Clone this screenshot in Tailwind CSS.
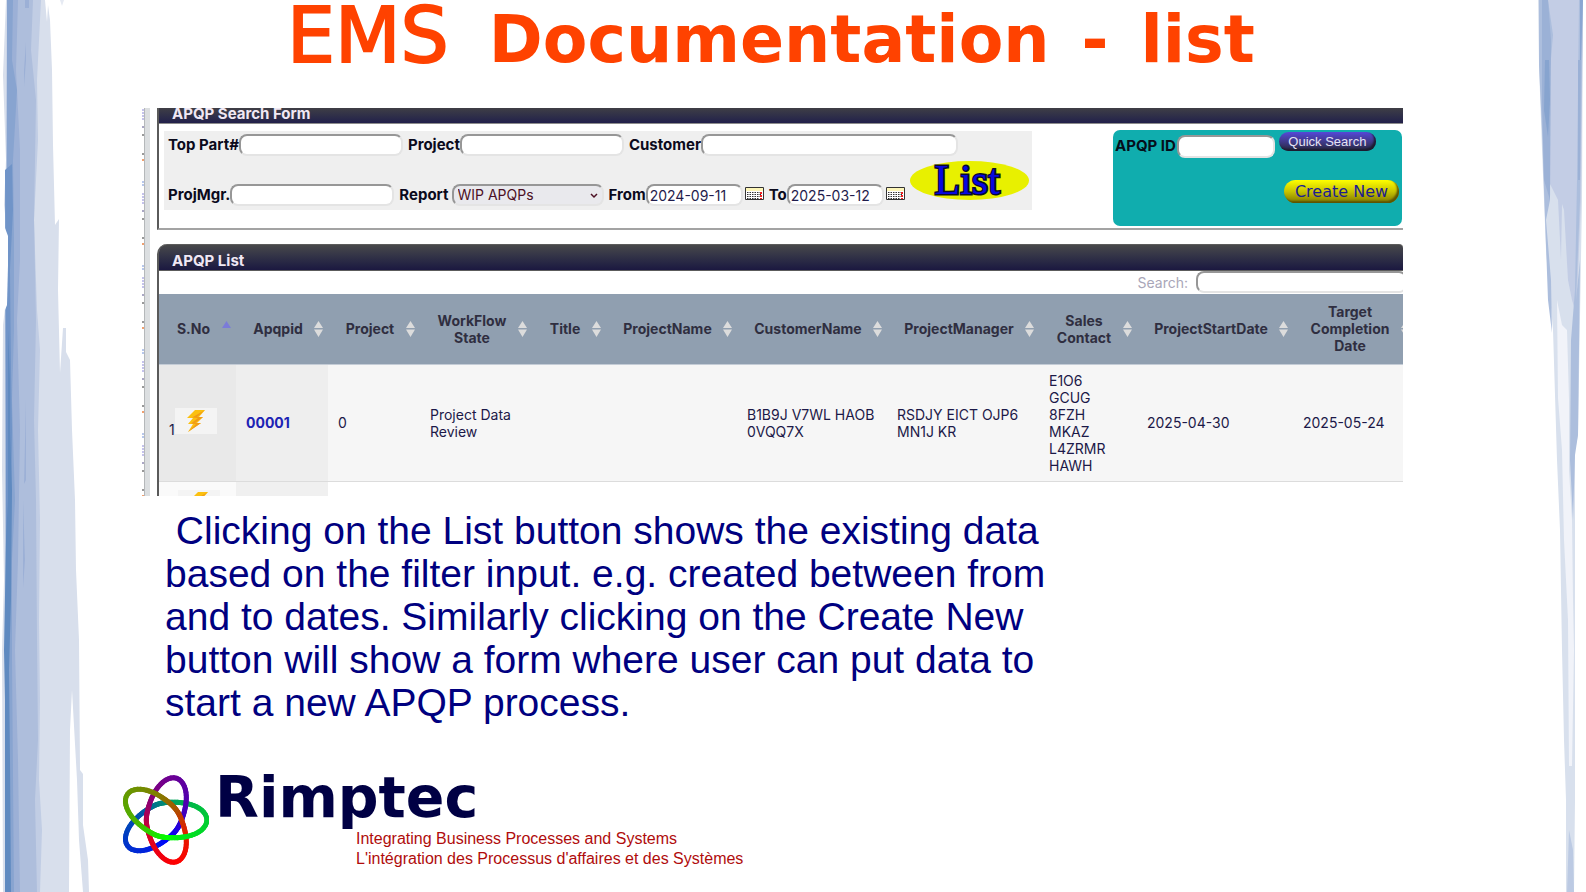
<!DOCTYPE html>
<html lang="en">
<head>
    <meta charset="UTF-8">
    <meta name="viewport" content="width=device-width, initial-scale=1.0">
    <title>EMS Documentation - list</title>
    <script src="https://cdn.jsdelivr.net/npm/@tailwindcss/browser@4"></script>
</head>
<body class="bg-white">
<main class="relative min-h-screen overflow-hidden">

    <!-- brush strokes on both edges -->
    <svg class="absolute left-0 top-0 h-full w-[92px]" viewBox="0 0 92 892" preserveAspectRatio="none" aria-hidden="true">
        <path fill="#d8dfec" d="M6 0H45L47 22L48 5L50 20L52 70L53 145L55 225L59 219L58 290L60 373L63 328H66V352L70 360L72 430L75 500L76 570L79 640L80 770L83 774L83 825L88 860L89 892H83L79 840L77 780L72 690L70 730L69 892H3L2 650L4 580L2 470L3 325L6 300L7 230L4 205L6 160L3 75Z"/>
        <path fill="#c1cde4" d="M6 0H41L37 80L38 140L34 220L37 310L40 350L38 430L40 520L39 620L40 700L39 780L42 830L40 892H5V670L7 560L7 0Z"/>
        <path fill="#aebedc" d="M7 0H33L31 50L36 100L34 220L36 320L34 420L36 500L37 640L38 740L35 800L37 892H6L7 520Z"/>
        <path fill="#9cb0d6" d="M7 0H18L16 70L20 150L20 260L17 320L20 430L18 560L15 650L18 760L20 892H6Z"/>
        <path fill="#9cb0d6" d="M25 0H29V8H25ZM26 42L24 70L24 87L26 60ZM26 400L24 484L26 480ZM23 500L23 588L25 560Z"/>
        <path fill="#88a4d0" d="M7 0H13L12 60L17 90L13 160L14 240L14 330L12 400L15 500L12 560L12 660L14 892H5Z"/>
        <path fill="#7094c8" d="M5 170L12 164L13 210L10 270L11 370L12 430L11 520L8 640H6Z"/>
        <path fill="#5f8ac0" d="M8 330L10 380V430L12 490L11 600L9 670L10 760L11 892H5L5 700L4 650L6 540L8 500Z"/>
        <path fill="#fff" d="M5 228L8 236V265L7 305L5 310Z"/>
        <path fill="#e6eaf3" d="M60 0H64L62 6Z"/>
    </svg>
    <svg class="absolute right-0 top-0 h-full w-[60px]" viewBox="0 0 60 892" preserveAspectRatio="none" aria-hidden="true">
        <path fill="#d8e0ed" d="M12 0H57L56 200L52 435L49 450L49 800L48 892H40L40 800L38 740L36 650L34 530L31 460L27 330L20 250L16 150L13 65Z"/>
        <path fill="#c3cde5" d="M14 0H57L55 200L51 300L49 310L46 300L42 280L38 210L36 204L35 260L32 200L22 180L17 130Z"/>
        <path fill="#acbedd" d="M50 300L54 200L57 0H53L51 180L49 290L45 340L44 460L47 520L49 455L52 435L54 260Z"/>
        <path fill="#acbedd" d="M13 0H22L27 35L24 70V200L20 220L25 280L26 333L22 300L18 190L16 130L13 65Z"/>
        <path fill="#9bb1d6" d="M16 0H22L25 40L24 200L18 180L16 100Z"/>
        <path fill="#87a4cf" d="M19 60H23L24 100L22 137L18 110Z"/>
        <path fill="#8aa6d2" d="M54 0H57L55 60H54Z"/>
        <path fill="#9bb1d6" d="M52 60H55L54 180H52Z"/>
        <path fill="#f1f3f9" d="M31 300L36 325L41 330L43 400L43 470L46 520L47 600L48 650L46 766H43L42 620L38 540L36 450L32 398Z"/>
        <path fill="#bccae3" d="M43 830L47 850L48 892H41Z"/>
    </svg>

    <h1 class="flex h-[108px] items-baseline gap-8 whitespace-nowrap pl-[287px] font-['DejaVu_Sans'] text-[65px] font-bold leading-[72px] text-[#ff4200]">
        <span class="mr-2 text-[76px] font-normal [-webkit-text-stroke:2px_#ff4200]">EMS</span>
        <span>Documentation</span>
        <span>-</span>
        <span>list</span>
    </h1>

    <!-- application window, clipped -->
    <section class="ml-[142px] mr-[183px] flex h-[388px] overflow-hidden bg-white font-[Inter]">
        <div class="flex w-[15px] shrink-0" aria-hidden="true">
            <svg class="h-full w-[2px]" viewBox="0 0 2 388" preserveAspectRatio="none">
                <defs>
                    <pattern id="ticks" width="2" height="84" patternUnits="userSpaceOnUse">
                        <path stroke="#8a86d8" d="M0 2H2M0 5H2M0 8H2M0 11H2"/>
                        <path stroke="#55508a" d="M0 19H2"/>
                        <path stroke="#333" d="M0 27H2M0 46H2"/>
                        <path stroke="#f0a070" stroke-width="2" d="M0 52H2"/>
                        <path stroke="#7090d8" d="M0 74H2M0 77H2"/>
                    </pattern>
                </defs>
                <rect width="2" height="388" fill="url(#ticks)"/>
            </svg>
            <div class="w-[6px] border-l border-[#b5b8ba] bg-[#dcdfe1]"></div>
        </div>

        <div class="min-w-0 flex-1">
            <div class="h-[122px] border-b-2 border-l-2 border-b-[#a3a3a3] border-l-[#5a5a5a]">
                <h2 class="flex h-4 items-end border-b border-[#8c8c8c] bg-linear-to-b from-[#3f3e45] to-[#22204a] pl-[13px] text-[15px] font-bold leading-[18px] text-[#f0e8f4]">APQP Search Form</h2>
                <div class="flex items-start justify-between pr-px pt-[6px]">
                    <form class="ml-[5px] mt-px flex h-[79px] w-[868px] flex-col gap-[5px] bg-[#efefef] pl-1 pt-[3px] text-[15px] font-bold leading-[22px] text-[#0b0a1c]">
                        <div class="flex gap-[5px]">
                            <div class="flex">
                                <label for="top-part">Top Part#</label>
                                <input id="top-part" type="text" class="h-[22px] w-[164px] rounded-lg border-2 border-b-[#e4e4e4] border-l-[#979797] border-r-[#e4e4e4] border-t-[#979797] bg-white">
                            </div>
                            <div class="flex">
                                <label for="project">Project</label>
                                <input id="project" type="text" class="h-[22px] w-[164px] rounded-lg border-2 border-b-[#e4e4e4] border-l-[#979797] border-r-[#e4e4e4] border-t-[#979797] bg-white">
                            </div>
                            <div class="flex">
                                <label for="customer">Customer</label>
                                <input id="customer" type="text" class="h-[22px] w-[257px] rounded-lg border-2 border-b-[#e4e4e4] border-l-[#979797] border-r-[#e4e4e4] border-t-[#979797] bg-white">
                            </div>
                        </div>
                        <div class="flex h-[45px] items-end gap-[5px]">
                            <div class="flex">
                                <label for="proj-mgr">ProjMgr.</label>
                                <input id="proj-mgr" type="text" class="h-[22px] w-[164px] rounded-lg border-2 border-b-[#e4e4e4] border-l-[#979797] border-r-[#e4e4e4] border-t-[#979797] bg-white">
                            </div>
                            <div class="flex gap-[3px]">
                                <label for="report">Report</label>
                                <div class="relative">
                                    <select id="report" class="h-[22px] w-[152px] appearance-none rounded-lg border-2 border-b-[#e4e4e4] border-l-[#979797] border-r-[#e4e4e4] border-t-[#979797] bg-[#e9e9ed] pl-1 text-sm font-normal leading-[18px] text-[#4c1024]">
                                        <option>WIP APQPs</option>
                                    </select>
                                    <svg class="pointer-events-none absolute right-[6px] top-2 h-2 w-2" viewBox="0 0 8 8" fill="none" stroke="#4c1024" stroke-width="1.5"><path d="M1 2L4 5L7 2"/></svg>
                                </div>
                            </div>
                            <div class="flex">
                                <label for="from">From</label>
                                <input id="from" type="text" value="2024-09-11" class="h-[22px] w-[97px] rounded-lg border-2 border-b-[#e4e4e4] border-l-[#979797] border-r-[#e4e4e4] border-t-[#979797] bg-white pl-[2px] text-sm font-normal text-[#1f1c4c]">
                                <button type="button" aria-label="Pick from date" class="ml-[2px] h-[22px] w-[19px] pt-[3px]">
                                    <svg class="-mt-[7px] h-[13px] w-[19px]" viewBox="0 0 19 13">
                                        <path fill="#fff" stroke="#333" d="M.5 .5H18.5V12.5H.5Z"/>
                                        <path fill="#fdf6b8" d="M1 1H18V4H1Z"/>
                                        <path stroke="#333" stroke-dasharray="1.5 1" d="M2 5.5H17M2 7.5H17M2 9.5H17M2 11.5H14"/>
                                        <path stroke="#f02020" stroke-width="2" stroke-dasharray="2 1" d="M16 5V12"/>
                                    </svg>
                                </button>
                            </div>
                            <div class="flex">
                                <label for="to">To</label>
                                <input id="to" type="text" value="2025-03-12" class="h-[22px] w-[97px] rounded-lg border-2 border-b-[#e4e4e4] border-l-[#979797] border-r-[#e4e4e4] border-t-[#979797] bg-white pl-[2px] text-sm font-normal text-[#1f1c4c]">
                                <button type="button" aria-label="Pick to date" class="ml-[2px] h-[22px] w-[19px] pt-[3px]">
                                    <svg class="-mt-[7px] h-[13px] w-[19px]" viewBox="0 0 19 13">
                                        <path fill="#fff" stroke="#333" d="M.5 .5H18.5V12.5H.5Z"/>
                                        <path fill="#fdf6b8" d="M1 1H18V4H1Z"/>
                                        <path stroke="#333" stroke-dasharray="1.5 1" d="M2 5.5H17M2 7.5H17M2 9.5H17M2 11.5H14"/>
                                        <path stroke="#f02020" stroke-width="2" stroke-dasharray="2 1" d="M16 5V12"/>
                                    </svg>
                                </button>
                            </div>
                            <button type="button" class="flex h-[39px] w-[119px] items-center justify-center self-start rounded-[50%] bg-[#e8f000] pb-[2px] pr-1 font-['Liberation_Serif'] text-[42px] font-normal leading-[36px] text-[#0808e0] [-webkit-text-stroke:3px_#0a0a28] [paint-order:stroke]">List</button>
                        </div>
                    </form>
                    <form class="flex h-[96px] w-[289px] flex-col justify-between rounded-[7px] bg-[#10adae] pb-[23px] pl-[2px] pr-[3px] pt-[2px] text-[15px] font-bold text-[#05101c]">
                        <div class="flex items-start">
                            <label for="apqp-id" class="pt-[2px] leading-[23px]">APQP ID</label>
                            <input id="apqp-id" type="text" class="ml-px mt-[3px] h-[23px] w-[98px] rounded-lg border-2 border-b-[#e4e4e4] border-l-[#979797] border-r-[#e4e4e4] border-t-[#979797] bg-white">
                            <button type="button" class="ml-1 h-[19px] w-[97px] rounded-full bg-linear-to-b from-[#5548d8] via-[#403a8c] to-[#28263e] font-['Liberation_Sans'] text-[13px] font-normal leading-[19px] text-[#e4e2f4] shadow-[inset_-2px_-2px_2px_#1c1c30]">Quick Search</button>
                        </div>
                        <button type="button" class="h-[23px] w-[115px] self-end rounded-full bg-linear-to-b from-[#ffff00] via-[#c8c400] to-[#807800] font-['DejaVu_Sans'] text-base font-normal leading-[22px] text-[#1c1c90] shadow-[inset_-2px_-2px_2px_#5c5400]">Create New</button>
                    </form>
                </div>
            </div>

            <div class="mt-[14px] rounded-tl-[10px] border-l-2 border-[#5a5a5a]">
                <h2 class="flex h-[27px] items-end rounded-tl-[8px] rounded-tr-[4px] border-b border-t border-[#5c5c5c] bg-linear-to-b from-[#48484a] to-[#1b1840] pl-[13px] text-[15px] font-bold leading-[18px] text-[#f0e8f4]">APQP List</h2>
                <div class="flex h-[23px] justify-end gap-2 text-sm leading-[24px] text-[#a9a6b8]">
                    <label for="search">Search:</label>
                    <input id="search" type="search" class="-mr-1 h-[22px] w-[211px] rounded-lg border-2 border-b-[#e4e4e4] border-l-[#979797] border-r-[#e4e4e4] border-t-[#979797] bg-white">
                </div>
                <table class="w-[1256px] table-fixed border-collapse text-left text-sm leading-[17px] text-[#1c1948]">
                    <colgroup>
                        <col class="w-[77px]"><col class="w-[92px]"><col class="w-[92px]"><col class="w-[112px]"><col class="w-[74px]"><col class="w-[131px]"><col class="w-[150px]"><col class="w-[152px]"><col class="w-[98px]"><col class="w-[156px]"><col class="w-[122px]">
                    </colgroup>
                    <thead id="head">
                        <tr class="h-[70px] border-b border-[#c4ccd6] bg-[#909fb0] text-center text-[#2f2e40]">
                            <th class="relative pl-[10px] pr-[18px]">S.No<svg class="absolute right-[5px] top-[27px] h-4 w-[9px]" viewBox="0 0 9 16"><path fill="#7b7bd8" d="M4.500 0L9 7H0Z"/></svg></th>
                            <th class="relative pl-[10px] pr-[18px]">Apqpid</th>
                            <th class="relative pl-[10px] pr-[18px]">Project</th>
                            <th class="relative pl-[10px] pr-[18px]">WorkFlow State</th>
                            <th class="relative pl-[10px] pr-[18px]">Title</th>
                            <th class="relative pl-[10px] pr-[18px]">ProjectName</th>
                            <th class="relative pl-[10px] pr-[18px]">CustomerName</th>
                            <th class="relative pl-[10px] pr-[18px]">ProjectManager</th>
                            <th class="relative pl-[10px] pr-[18px]">Sales Contact</th>
                            <th class="relative pl-[10px] pr-[18px]">ProjectStartDate</th>
                            <th class="relative pl-[10px] pr-[18px]">Target Completion Date</th>
                        </tr>
                    </thead>
                    <tbody>
                        <tr class="h-[117px] border-b border-[#dcdcdc] bg-[#f6f6f6]">
                            <td class="bg-[#e9e9e9] pl-[10px]">
                                <div class="flex items-end">1<svg class="mb-1 h-[26px] w-[42px] bg-[#f4f4f4]" viewBox="0 0 42 26" role="img" aria-label="Actions"><path fill="#fbc010" d="M20 2H30L24 9H28L22 15H26L13 24L18 16H13L18 10H12Z"/><path fill="#f09a18" d="M30 2L22 9L28 9L20 15L26 15L13 24L21 16L16 15.500L23 10L17 9.500Z"/></svg></div>
                            </td>
                            <td class="bg-[#eee] pl-[10px]"><a href="#" class="font-bold text-[#1c22b4]">00001</a></td>
                            <td class="pl-[10px]">0</td>
                            <td class="pl-[10px]">Project Data Review</td>
                            <td></td>
                            <td></td>
                            <td class="pl-[10px]">B1B9J V7WL HAOB 0VQQ7X</td>
                            <td class="pl-[10px]">RSDJY EICT OJP6 MN1J KR</td>
                            <td class="pl-[10px] pr-[18px]">E1O6 GCUG 8FZH MKAZ L4ZRMR HAWH</td>
                            <td class="pl-[10px]">2025-04-30</td>
                            <td class="pl-[10px]">2025-05-24</td>
                        </tr>
                        <tr class="h-[60px] align-top">
                            <td class="bg-[#fafafa] pl-[19px] pt-2"><svg class="h-[26px] w-[42px] bg-[#f4f4f4]" viewBox="0 0 42 26" role="img" aria-label="Actions"><path fill="#fbc010" d="M20 2H30L24 9H28L22 15H26L13 24L18 16H13L18 10H12Z"/><path fill="#f09a18" d="M30 2L22 9L28 9L20 15L26 15L13 24L21 16L16 15.500L23 10L17 9.500Z"/></svg></td>
                            <td class="bg-[#f0f0f0]"></td>
                            <td colspan="9"></td>
                        </tr>
                    </tbody>
                </table>
            </div>
        </div>
    </section>

    <p class="ml-[165px] mt-[13px] max-w-[900px] font-['Liberation_Sans'] text-[39px] leading-[43px] text-[#000080]">&nbsp;Clicking on the List button shows the existing data based on the filter input. e.g. created between from and to dates. Similarly clicking on the Create New button will show a form where user can put data to start a new APQP process.</p>

    <footer class="ml-[117px] mt-[41px] flex gap-[6px]">
        <svg id="logo" class="mt-[8px] h-[94px] w-[92px] shrink-0" viewBox="-46 -47 92 94" role="img" aria-label="Rimptec logo"></svg>
        <div>
            <div class="font-['DejaVu_Sans'] text-[57px] font-bold leading-[64px] text-[#000044]">Rimptec</div>
            <div class="ml-[141px] font-['Liberation_Sans'] text-base leading-5 text-[#b00c0c]">
                <p>Integrating Business Processes and Systems</p>
                <p lang="fr">L'intégration des Processus d'affaires et des Systèmes</p>
            </div>
        </div>
    </footer>
</main>

<script>
    const NS = 'http://www.w3.org/2000/svg';

    // sort arrows on every unsorted column
    document.querySelectorAll('#head th:not(:first-child)').forEach(th => {
        th.insertAdjacentHTML('beforeend', '<svg class="absolute right-[5px] top-[27px] h-4 w-[9px]" viewBox="0 0 9 16"><path fill="#dcdcdc" d="M4.5 0L9 7H0ZM0 8.500H9L4.5 16Z"/></svg>');
    });

    // logo: five lobes in three turns, colour runs red -> green -> blue -> red
    const logo = document.getElementById('logo');
    const steps = 300;
    const point = i => {
        const u = i / steps * 10 * Math.PI;
        const r = 1 / (0.0435 - 0.0186 * Math.cos(u) - 0.0021 * Math.cos(2 * u));
        const angle = -i / steps * 6 * Math.PI;
        return [r * Math.cos(angle), r * Math.sin(angle)];
    };
    const color = f => {
        const s = (f % 1) * 3, k = Math.floor(s), m = s - k;
        const rgb = [0, 0, 0];
        rgb[k] = Math.round(255 * (1 - m));
        rgb[(k + 1) % 3] = Math.round(255 * m);
        return `rgb(${rgb.join(',')})`;
    };
    for (let i = 0; i < steps; i++) {
        const [x1, y1] = point(i), [x2, y2] = point(i + 1);
        const line = document.createElementNS(NS, 'path');
        line.setAttribute('d', `M${x1} ${y1}L${x2} ${y2}`);
        line.setAttribute('stroke', color(0.4 + i / steps));
        line.setAttribute('stroke-width', 5);
        line.setAttribute('stroke-linecap', 'round');
        logo.appendChild(line);
    }
</script>
</body>
</html>
